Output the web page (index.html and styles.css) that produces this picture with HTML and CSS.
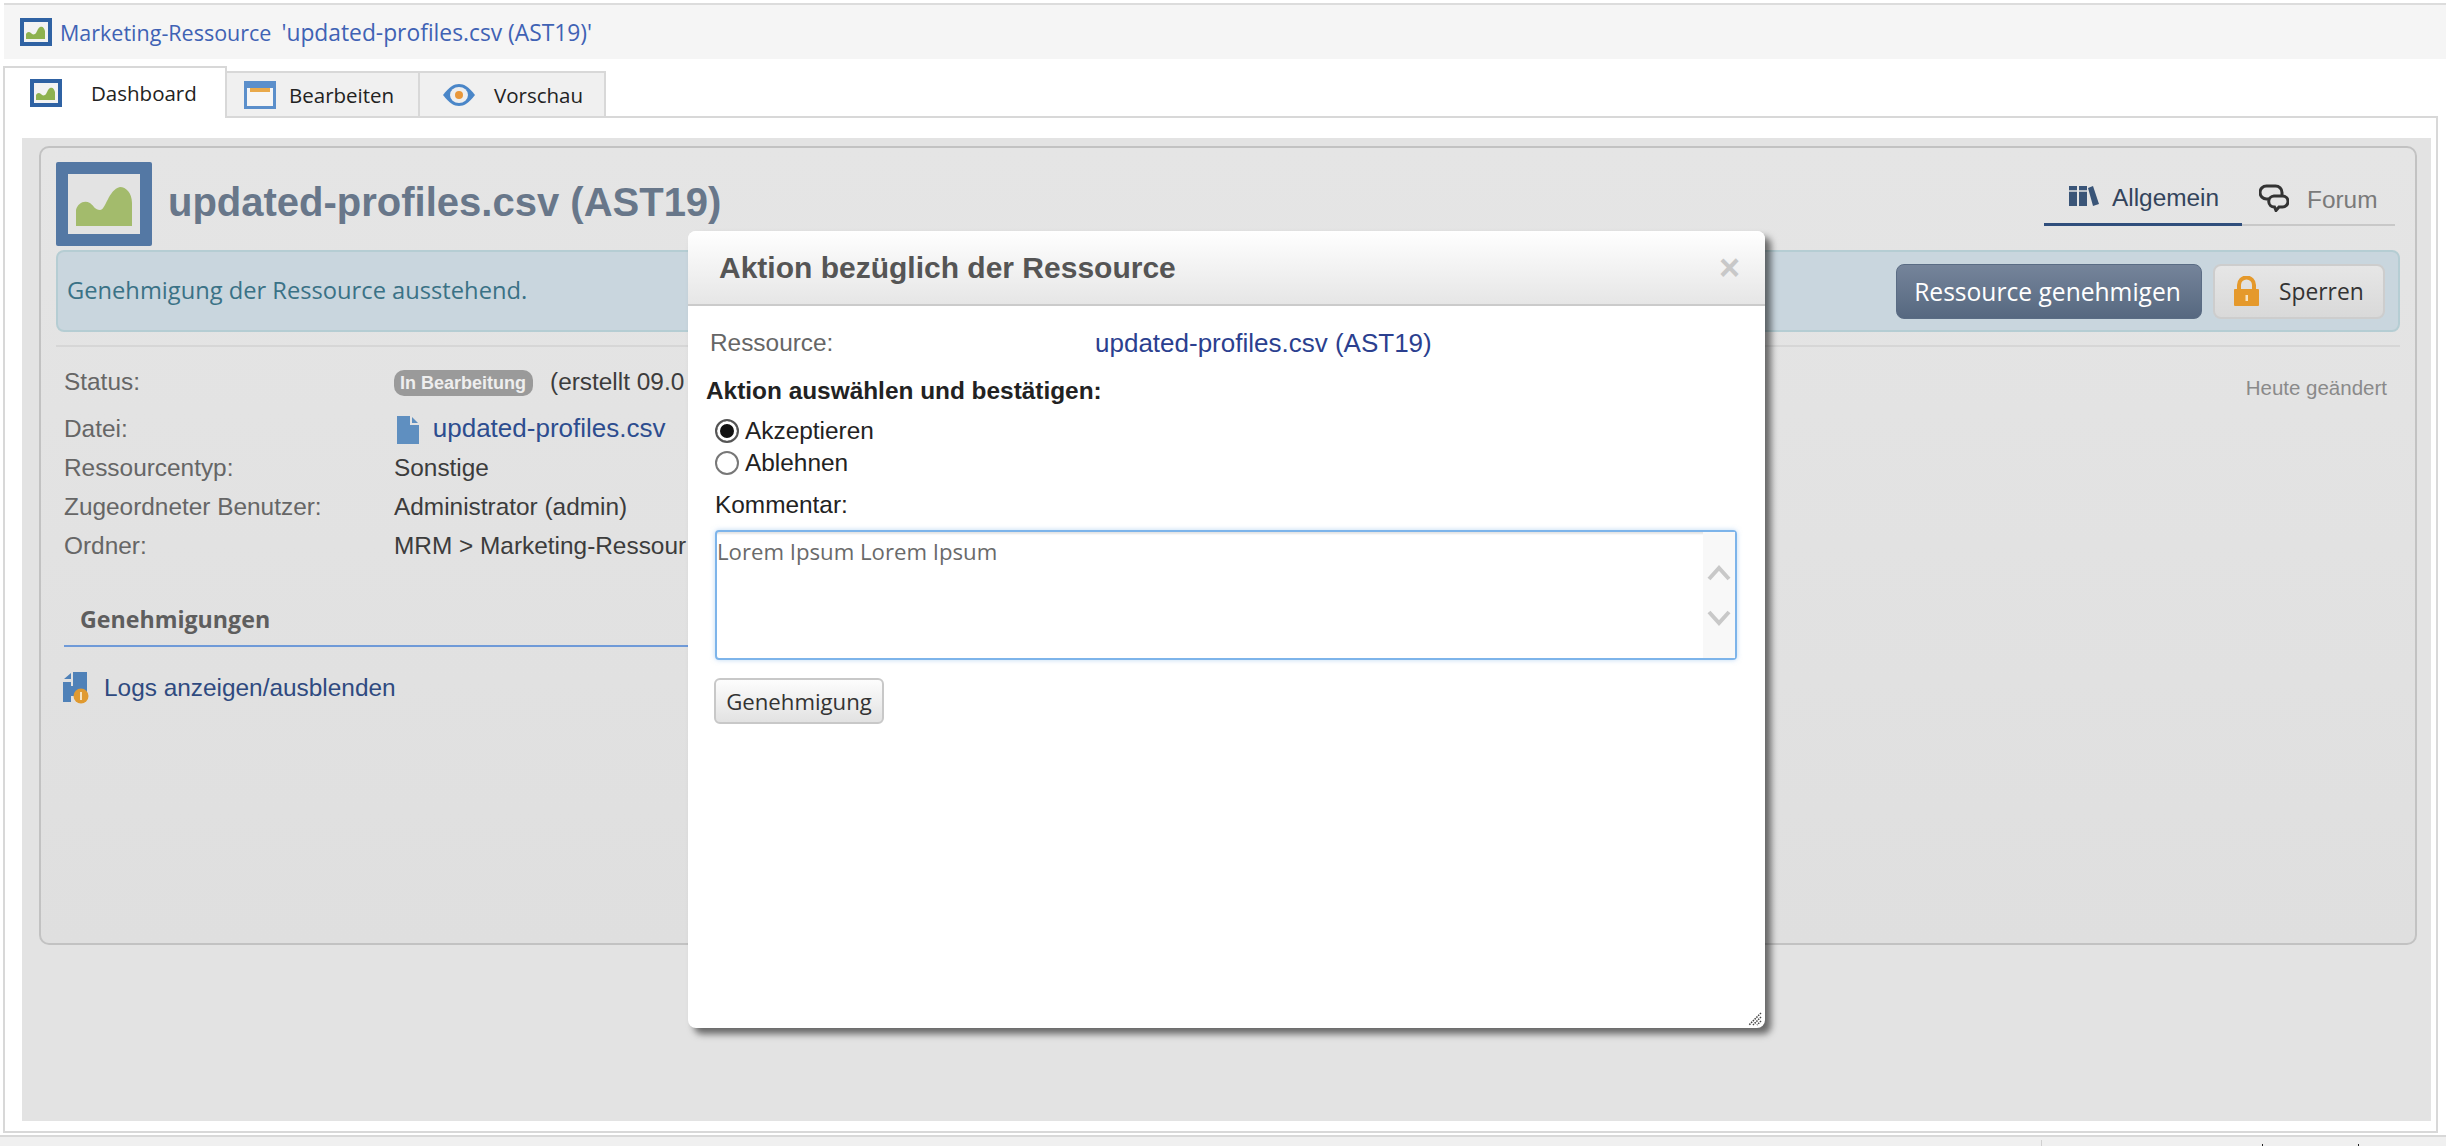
FILE: index.html
```html
<!DOCTYPE html>
<html lang="de">
<head>
  <meta charset="UTF-8" />
  <title>Marketing-Ressource</title>
  <link rel="stylesheet" href="styles.css">
</head>
<body>
  <svg class="defs" width="0" height="0">
    <symbol id="chart" viewBox="0 0 32 28">
      <rect x="0" y="0" width="32" height="28" fill="#2f62a3"/>
      <rect x="4" y="4" width="24" height="20" fill="#f3f3f3"/>
      <path d="M6 21v-5c1-2 3-3 5-1 1 1 2 2 4 1 2-1 2-5 5-7 3-1 4 1 5 4v8z" fill="#8eb24f"/>
    </symbol>
  </svg>

  <div class="titlebar">
    <svg class="icon-small"><use href="#chart"/></svg>
    <span class="titlebar-type">Marketing-Ressource</span>
    <span class="titlebar-name">'updated-profiles.csv (AST19)'</span>
  </div>

  <div class="tabs">
    <div class="tab active">
      <svg class="icon-small"><use href="#chart"/></svg>
      <span>Dashboard</span>
    </div>
    <div class="tab">
      <svg class="icon-small" viewBox="0 0 32 28">
        <rect x="0" y="0" width="32" height="28" fill="#5b8fcb"/>
        <rect x="3" y="7" width="26" height="18" fill="#f5f5f5"/>
        <rect x="6" y="7" width="20" height="4" fill="#e9a94a"/>
      </svg>
      <span>Bearbeiten</span>
    </div>
    <div class="tab">
      <svg class="icon-small" viewBox="0 0 32 28">
        <path d="M0 14C6 6 11 3 16 3s10 3 16 11c-6 8-11 11-16 11S6 22 0 14z" fill="#4a86c8"/>
        <ellipse cx="16" cy="14" rx="9" ry="8" fill="#eeeeee"/>
        <circle cx="16" cy="14" r="4" fill="#e8973a"/>
      </svg>
      <span>Vorschau</span>
    </div>
    <div class="tabs-rest"></div>
  </div>

  <div class="panel">
    <div class="overlay-area">
      <div class="card">
        <div class="card-head">
          <svg class="icon-large" viewBox="0 0 96 84">
            <rect x="0" y="0" width="96" height="84" rx="2" fill="#5478a4"/>
            <rect x="12" y="12" width="72" height="60" fill="#e3e3e3"/>
            <path d="M20 64V48c2-7 8-10 14-7 4 3 5 7 10 7 6 0 8-20 20-23 6 0 12 6 12 16v23z" fill="#a3bb6c"/>
          </svg>
          <h1>updated-profiles.csv (AST19)</h1>
          <div class="head-nav">
            <div class="nav-item current">
              <svg class="nav-books" viewBox="0 0 30 20">
                <path d="M0 0h8v20H0zM10 0h8v20h-8zM19 2l5-2 6 18-6 2z" fill="#3a5578"/>
                <path d="M0 5h8M10 5h8" stroke="#e3e3e3" stroke-width="1.5"/>
              </svg>
              <span>Allgemein</span>
            </div>
            <div class="nav-item">
              <svg class="nav-forum" viewBox="0 0 30 28">
                <path d="M11 15H7.500a6.500 6.500 0 0 1 0-13h9a6.500 6.500 0 0 1 6.500 6.500V11" fill="none" stroke="#333" stroke-width="3"/>
                <path d="M15 12h8.500a5.500 5.500 0 0 1 0 11H20l-3 3.500-1.500-3.500a5.500 5.500 0 0 1-.5-11z" fill="none" stroke="#333" stroke-width="3"/>
              </svg>
              <span>Forum</span>
            </div>
          </div>
        </div>

        <div class="alert">
          <span class="alert-text">Genehmigung der Ressource ausstehend.</span>
          <button class="btn-primary">Ressource genehmigen</button>
          <button class="btn-lock">
            <svg viewBox="0 0 25 30" width="25" height="30">
              <path d="M5 14V9a7.500 7.500 0 0 1 15 0v5" fill="none" stroke="#e5992b" stroke-width="4"/>
              <rect x="0" y="13" width="25" height="17" rx="1" fill="#e5992b"/>
              <rect x="11.500" y="19" width="2.500" height="6" fill="#f7e3c0"/>
            </svg>
            <span>Sperren</span>
          </button>
        </div>

        <div class="details">
          <div class="changed">Heute geändert</div>
          <div class="row row-status">
            <div class="label">Status:</div>
            <div class="value"><span class="badge">In Bearbeitung</span><span class="created">(erstellt 09.0</span></div>
          </div>
          <div class="row row-file">
            <div class="label">Datei:</div>
            <div class="value">
              <svg class="file-icon" viewBox="0 0 22 28">
                <path d="M0 0h13v9h9v19H0z" fill="#5f8fc0"/>
                <path d="M15 1l6 6h-6z" fill="#5f8fc0"/>
              </svg>
              <a class="link" href="#">updated-profiles.csv</a>
            </div>
          </div>
          <div class="row"><div class="label">Ressourcentyp:</div><div class="value">Sonstige</div></div>
          <div class="row"><div class="label">Zugeordneter Benutzer:</div><div class="value">Administrator (admin)</div></div>
          <div class="row"><div class="label">Ordner:</div><div class="value">MRM &gt; Marketing-Ressour</div></div>
        </div>

        <h2 class="section-title">Genehmigungen</h2>
        <div class="logs">
          <svg class="logs-icon" viewBox="0 0 26 32">
            <path d="M1 7l7-6v6zM0 10h8v4h2V0h14v24H8v6H0z" fill="#4f81b8"/>
            <circle cx="18" cy="24" r="7.500" fill="#e09a30"/>
            <rect x="17" y="20" width="2" height="8" fill="#f7e3c0"/>
          </svg>
          <a class="logs-link" href="#">Logs anzeigen/ausblenden</a>
        </div>
      </div>
    </div>
  </div>

  <div class="statusbar">
    <div class="status-divider">
      <span class="status-tick"></span>
      <span class="status-tick"></span>
    </div>
  </div>

  <div class="dialog">
    <div class="dialog-head">
      <h3>Aktion bezüglich der Ressource</h3>
      <span class="dialog-close">×</span>
    </div>
    <div class="dialog-body">
      <div class="dialog-res">
        <span class="dialog-res-label">Ressource:</span>
        <a class="dialog-res-link" href="#">updated-profiles.csv (AST19)</a>
      </div>
      <div class="dialog-prompt">Aktion auswählen und bestätigen:</div>
      <label class="choice"><span class="radio checked"></span>Akzeptieren</label>
      <label class="choice"><span class="radio"></span>Ablehnen</label>
      <div class="comment-label">Kommentar:</div>
      <div class="textarea">
        <div class="textarea-text">Lorem Ipsum Lorem Ipsum</div>
        <div class="textarea-scroll">
          <svg viewBox="0 0 24 16" width="24" height="16"><path d="M2 14L12 3l10 11" fill="none" stroke="#c8c8c8" stroke-width="4"/></svg>
          <svg viewBox="0 0 24 16" width="24" height="16"><path d="M2 2l10 11L22 2" fill="none" stroke="#c8c8c8" stroke-width="4"/></svg>
        </div>
      </div>
      <button class="btn-submit">Genehmigung</button>
    </div>
    <svg class="resize-grip" viewBox="0 0 14 14" width="14" height="14">
      <path d="M13 1L1 13M13 5L5 13M13 9L9 13" stroke="#444" stroke-width="1.500" stroke-dasharray="1.500 1"/>
    </svg>
  </div>
</body>
</html>
```

FILE: styles.css
```css
html, body {
  margin: 0;
  height: 100%;
  overflow: hidden;
}
body {
  display: flex;
  flex-direction: column;
  background: #fff;
  font-family: "Liberation Sans", Arial, sans-serif;
  font-size: 24.4px;
  color: #3c3c3c;
}
.defs { position: absolute; }
.icon-small { width: 32px; height: 28px; flex: none; }

/* ---------- top bar ---------- */
.titlebar {
  height: 56px;
  margin: 3px 0 0 4px;
  padding-left: 16px;
  display: flex;
  align-items: center;
  border-top: 2px solid #dcdcdc;
  background: #f5f5f5;
  box-sizing: border-box;
  font-family: "Open Sans", sans-serif;
  font-size: 21.5px;
  color: #3f62b4;
}
.titlebar-type { margin-left: 8px; }
.titlebar-name { margin-left: 10px; font-size: 22.8px; }

/* ---------- tabs ---------- */
.tabs {
  display: flex;
  align-items: flex-end;
  height: 52px;
  margin: 7px 0 0 3px;
  font-family: "Open Sans", sans-serif;
  font-size: 20.5px;
  color: #222;
}
.tab {
  display: flex;
  align-items: center;
  box-sizing: border-box;
  height: 47px;
  width: 193px;
  padding-left: 17px;
  gap: 13px;
  background: #f0f0f0;
  border-top: 2px solid #d8d8d8;
  border-right: 2px solid #d8d8d8;
  border-bottom: 2px solid #d8d8d8;
}
.tab.active {
  height: 52px;
  width: 224px;
  padding-left: 25px;
  gap: 29px;
  background: #fff;
  border: 2px solid #d8d8d8;
  border-bottom: 0;
}
.tab:nth-child(3) { width: 186px; padding-left: 23px; gap: 19px; }
.tabs-rest { flex: 1; border-bottom: 2px solid #d8d8d8; margin-right: 8px; }

/* ---------- main panel ---------- */
.panel {
  flex: 1;
  margin: 0 8px 2px 3px;
  padding: 20px 5px 10px 17px;
  display: flex;
  border: solid #d8d8d8;
  border-width: 0 2px 2px 2px;
  min-height: 0;
}
.overlay-area {
  flex: 1;
  padding: 8px 14px 0 17px;
  background: #e3e3e3;
}
.card {
  box-sizing: border-box;
  height: 799px;
  padding: 14px 15px 0 15px;
  border: 2px solid #c2c2c2;
  border-radius: 10px;
  background: linear-gradient(#e5e5e5, #dfdfdf);
}
.card-head {
  display: flex;
  align-items: center;
  height: 84px;
}
.icon-large { width: 96px; height: 84px; flex: none; }
h1 {
  margin: 0 0 4px 16px;
  flex: 1;
  font-size: 40px;
  font-weight: bold;
  color: #68778a;
}
.head-nav {
  display: flex;
  align-self: flex-start;
  margin: 17px 5px 0 0;
  height: 47px;
  width: 351px;
  font-size: 24.4px;
  border-bottom: 2px solid #c8c8c8;
  box-sizing: border-box;
}
.nav-item {
  display: flex;
  align-items: center;
  flex: none;
  gap: 18px;
  height: 47px;
  padding: 0 0 10px 17px;
  box-sizing: border-box;
  color: #7a7a7a;
}
.nav-item span { position: relative; top: 2px; }
.nav-item.current {
  width: 198px;
  gap: 13px;
  padding-left: 25px;
  color: #33445c;
  border-bottom: 3px solid #2f4e7c;
}
.nav-books { width: 30px; height: 20px; flex: none; }
.nav-forum { width: 30px; height: 28px; flex: none; }

/* ---------- alert strip ---------- */
.alert {
  display: flex;
  align-items: center;
  box-sizing: border-box;
  height: 82px;
  margin: 4px 0 0;
  padding: 0 13px 0 9px;
  background: #c9d6de;
  border: 2px solid #b5cdd3;
  border-radius: 8px;
  font-family: "Open Sans", sans-serif;
}
.alert-text { flex: 1; padding-bottom: 2px; font-size: 23.7px; color: #3a7286; }
.btn-primary {
  height: 55px;
  width: 306px;
  padding: 0 3px 0 0;
  background: linear-gradient(#75849a, #566880);
  border: 1px solid #5a6c84;
  border-radius: 8px;
  color: #fff;
  font-family: "Open Sans", sans-serif;
  font-size: 24.6px;
}
.btn-lock {
  display: flex;
  align-items: center;
  gap: 20px;
  height: 55px;
  width: 172px;
  margin-left: 11px;
  padding: 0 0 0 19px;
  background: linear-gradient(#e6e6e6, #d9d9d9);
  border: 2px solid #cdcdcd;
  border-radius: 8px;
  color: #333;
  font-family: "Open Sans", sans-serif;
  font-size: 22.8px;
}

/* ---------- detail rows ---------- */
.details {
  margin-top: 13px;
  padding: 15px 0 0 8px;
  border-top: 2px solid #d6d6d6;
}
.changed {
  float: right;
  margin: 14px 13px 0 0;
  font-size: 20.5px;
  color: #8a8a8a;
}
.row { display: flex; height: 39px; line-height: 39px; white-space: nowrap; }
.row-status { height: 47px; line-height: 39px; }
.label { width: 330px; flex: none; color: #666; }
.badge {
  display: inline-block;
  height: 26px;
  line-height: 26px;
  padding: 0 7px 0 6px;
  margin-right: 17px;
  vertical-align: 1px;
  background: #9a9a9a;
  border-radius: 10px;
  color: #eee;
  font-size: 18px;
  font-weight: bold;
}
.file-icon { width: 22px; height: 28px; margin: 0 7px 0 3px; vertical-align: -7px; }
.link { color: #2d4d8f; text-decoration: none; font-size: 26px; }

h2.section-title {
  width: 640px;
  margin: 38px 0 0 8px;
  padding: 0 0 10px 16px;
  border-bottom: 2px solid #6f9ad8;
  font-family: "Open Sans", sans-serif;
  font-size: 23.2px;
  color: #5e5e5e;
}
.logs {
  display: flex;
  align-items: center;
  gap: 15px;
  margin: 25px 0 0 7px;
}
.logs-icon { width: 26px; height: 32px; flex: none; }
.logs-link { color: #2f4a80; text-decoration: none; }

/* ---------- status bar ---------- */
.statusbar {
  flex: none;
  height: 9px;
  border-top: 2px solid #d8d8d8;
  background: #f0f0f0;
  display: flex;
  justify-content: flex-end;
}
.status-divider {
  display: flex;
  align-items: flex-end;
  gap: 95px;
  box-sizing: border-box;
  width: 405px;
  margin-top: 3px;
  padding-left: 220px;
  border-left: 1px solid #d0d0d0;
}
.status-tick { width: 1px; height: 2px; background: #222; }

/* ---------- dialog (floats over the page) ---------- */
.dialog {
  position: absolute;
  left: 688px;
  top: 231px;
  width: 1077px;
  height: 797px;
  background: #fff;
  border-radius: 8px;
  box-shadow: 6px 6px 7px rgba(0, 0, 0, .55);
}
.dialog-head {
  display: flex;
  align-items: center;
  justify-content: space-between;
  box-sizing: border-box;
  height: 75px;
  padding: 0 25px 0 31px;
  border-bottom: 2px solid #cbcbcb;
  border-radius: 8px 8px 0 0;
  background: linear-gradient(#fff, #e6e6e6);
}
.dialog-head h3 { margin: 0; font-size: 30px; color: #555; }
.dialog-close { font-size: 36px; font-weight: bold; color: #c8c8c8; }
.dialog-body { padding: 22px 0 0 26px; }
.dialog-res { display: flex; height: 30px; line-height: 30px; margin-left: -4px; }
.dialog-res-label { width: 385px; color: #666; }
.dialog-res-link { color: #2b3f8f; text-decoration: none; font-size: 26px; }
.dialog-prompt { margin: 18px 0 0 -8px; font-weight: bold; color: #222; line-height: 30px; }
.choice { display: flex; align-items: center; height: 32px; margin-left: 1px; color: #222; }
.dialog-prompt + .choice { margin-top: 9px; }
.radio {
  box-sizing: border-box;
  width: 24px;
  height: 24px;
  margin-right: 6px;
  border: 2px solid #777;
  border-radius: 50%;
  background: #fff;
}
.radio.checked { border-color: #555; box-shadow: inset 0 0 0 3px #fff, inset 0 0 0 12px #111; }
.comment-label { margin: 11px 0 0 1px; line-height: 30px; color: #222; }
.textarea {
  display: flex;
  box-sizing: border-box;
  width: 1022px;
  height: 130px;
  margin: 10px 0 0 1px;
  border: 2px solid #7db4ea;
  border-radius: 4px;
  box-shadow: 0 0 5px rgba(125, 180, 234, .5), inset 0 4px 2px -2px #e4e4e4;
}
.textarea-text {
  flex: 1;
  padding: 4px 0 0 0;
  font-family: "Open Sans", sans-serif;
  font-size: 22.2px;
  color: #6a6a6a;
}
.textarea-scroll {
  display: flex;
  flex-direction: column;
  align-items: center;
  gap: 29px;
  width: 32px;
  padding-top: 33px;
  background: #f8f8f8;
}
.btn-submit {
  display: block;
  height: 46px;
  width: 170px;
  margin: 18px 0 0;
  padding: 0;
  background: linear-gradient(#fdfdfd, #e2e2e2);
  border: 2px solid #c8c8c8;
  border-radius: 6px;
  color: #333;
  font-family: "Open Sans", sans-serif;
  font-size: 22.2px;
}
.resize-grip { position: absolute; right: 3px; bottom: 2px; }
```
